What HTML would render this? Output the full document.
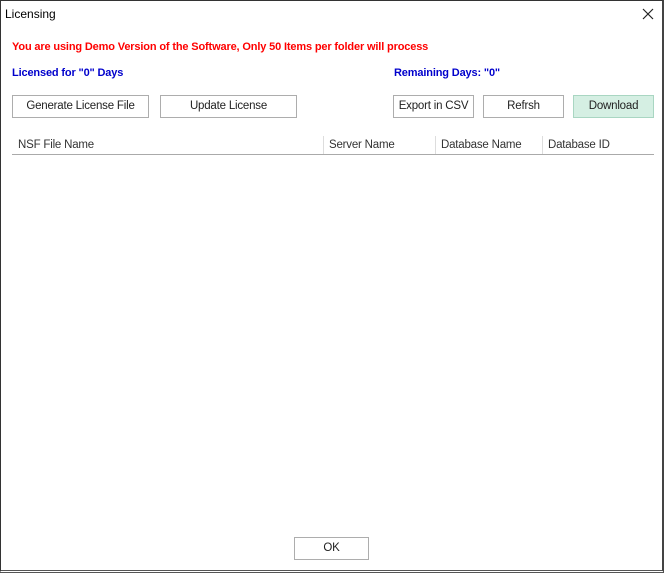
<!DOCTYPE html>
<html><head><style>
body{margin:0;width:665px;height:574px;background:#fff;font-family:"Liberation Sans",sans-serif;position:relative;overflow:hidden}
.a{position:absolute}
.frame{left:0;top:0;width:661px;height:569px;border:1px solid #333;border-right:2px solid #444;border-bottom:3px double #555}
.t{font-size:12px;color:#000}
.b{font-weight:bold;font-size:11px;letter-spacing:-0.15px}
.btn{position:absolute;box-sizing:border-box;border:1px solid #adadad;background:#fff;font-size:11.5px;letter-spacing:-0.2px;color:#222;text-align:center;line-height:21px;height:23px}
.h{font-size:11.5px;letter-spacing:-0.2px;color:#333;top:139px}
.sep{top:136px;width:1px;height:18px;background:#ddd}
</style></head><body>
<div class="a frame"></div>
<div class="a t" style="left:5px;top:7px;font-size:12px">Licensing</div>
<svg class="a" style="left:642px;top:8px" width="12" height="12"><path d="M1 1L11 11M11 1L1 11" stroke="#222" stroke-width="1.2"/></svg>
<div class="a b" style="left:12px;top:41px;color:#ff0000">You are using Demo Version of the Software, Only 50 Items per folder will process</div>
<div class="a b" style="left:12px;top:67px;color:#0000cc">Licensed for "0" Days</div>
<div class="a b" style="left:394px;top:67px;color:#0000cc">Remaining Days: "0"</div>
<div class="btn" style="left:12px;top:95px;width:137px">Generate License File</div>
<div class="btn" style="left:160px;top:95px;width:137px">Update License</div>
<div class="btn" style="left:393px;top:95px;width:81px">Export in CSV</div>
<div class="btn" style="left:483px;top:95px;width:81px">Refrsh</div>
<div class="btn" style="left:573px;top:95px;width:81px;background:#d5efe3;border-color:#a9d6c2">Download</div>
<div class="a h" style="left:18px">NSF File Name</div>
<div class="a h" style="left:329px">Server Name</div>
<div class="a h" style="left:441px">Database Name</div>
<div class="a h" style="left:548px">Database ID</div>
<div class="a sep" style="left:323px"></div>
<div class="a sep" style="left:435px"></div>
<div class="a sep" style="left:542px"></div>
<div class="a" style="left:12px;top:154px;width:642px;height:1px;background:#aaa"></div>
<div class="btn" style="left:294px;top:537px;width:75px">OK</div>
</body></html>
